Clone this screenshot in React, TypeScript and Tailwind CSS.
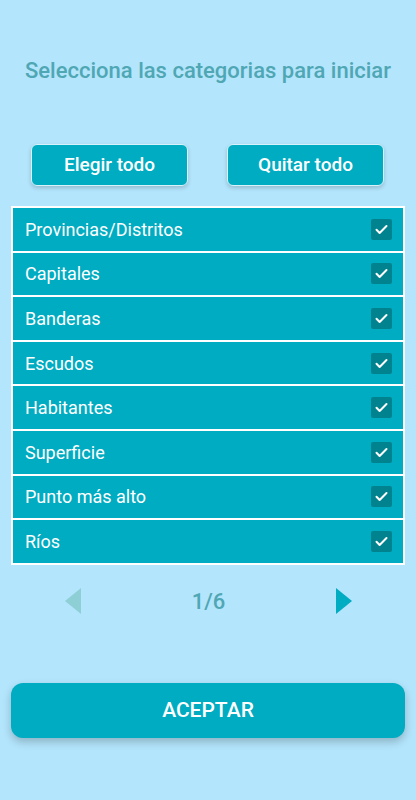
export default function App() {
  const categories = [
    "Provincias/Distritos",
    "Capitales",
    "Banderas",
    "Escudos",
    "Habitantes",
    "Superficie",
    "Punto más alto",
    "Ríos",
  ];

  return (
    <div
      className="w-[416px] h-[800px] bg-[#b3e5fc] flex flex-col"
      style={{ fontFamily: "Roboto, 'Noto Sans', sans-serif" }}
    >
      <h1 className="mt-[57px] text-center text-[22px] leading-[28px] font-medium text-[#4fa7b4]">
        Selecciona las categorias para iniciar
      </h1>

      <div className="mt-[59px] flex justify-between px-[31px] pr-[32px]">
        <button className="w-[157px] h-[42px] rounded-[6px] bg-[#00acc1] border border-[#d8f2fb] shadow-[0_2px_4px_rgba(0,0,0,0.18)] text-white text-[19px] font-medium">
          Elegir todo
        </button>
        <button className="w-[157px] h-[42px] rounded-[6px] bg-[#00acc1] border border-[#d8f2fb] shadow-[0_2px_4px_rgba(0,0,0,0.18)] text-white text-[19px] font-medium">
          Quitar todo
        </button>
      </div>

      <div className="mt-[20px] mx-[11px] bg-white p-[2px] flex flex-col gap-[2px]">
        {categories.map((c) => (
          <div
            key={c}
            className="h-[42.6px] bg-[#00acc1] flex items-center justify-between pl-[12px] pr-[11px]"
          >
            <span className="text-white text-[18px]">{c}</span>
            <span className="w-[21px] h-[21px] rounded-[2px] bg-[#00838f] flex items-center justify-center">
              <svg width="15" height="15" viewBox="0 0 24 24" fill="none">
                <path
                  d="M4 12.5l5 5L20 6.5"
                  stroke="white"
                  strokeWidth="3.2"
                  strokeLinecap="round"
                  strokeLinejoin="round"
                />
              </svg>
            </span>
          </div>
        ))}
      </div>

      <div className="mt-[20px] flex items-center justify-between px-[64px] pl-[65px]">
        <svg width="16" height="26" viewBox="0 0 16 26">
          <path d="M16 0 L0 13 L16 26 Z" fill="#8ecfd6" />
        </svg>
        <span className="text-[22px] font-medium text-[#4fa7b4]">1/6</span>
        <svg width="16" height="26" viewBox="0 0 16 26">
          <path d="M0 0 L16 13 L0 26 Z" fill="#00acc1" />
        </svg>
      </div>

      <button className="mt-[65px] mx-[11px] h-[55px] rounded-[12px] bg-[#00acc1] shadow-[0_4px_8px_rgba(0,0,0,0.22)] text-white text-[21px] font-medium">
        ACEPTAR
      </button>
    </div>
  );
}
